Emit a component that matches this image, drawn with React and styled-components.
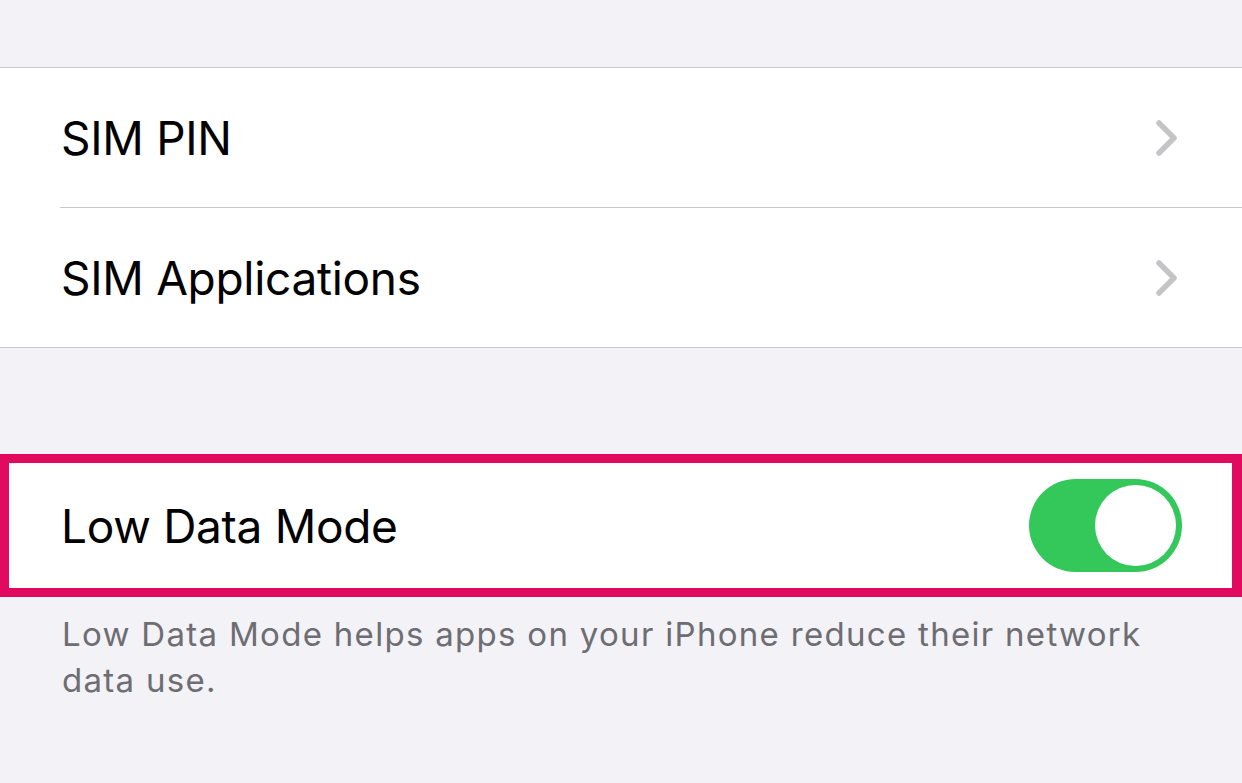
import React from "react";
import styled, { createGlobalStyle } from "styled-components";

const GlobalStyle = createGlobalStyle`
  html, body {
    margin: 0;
    padding: 0;
    background: #f2f2f7;
    font-family: Inter, "Noto Sans", "Liberation Sans", sans-serif;
    -webkit-font-smoothing: antialiased;
  }
`;

function Chevron() {
  return (
    <svg width="24" height="36" viewBox="0 0 24 36" fill="none">
      <path
        d="M4 3 L19 18 L4 33"
        stroke="#c4c4c7"
        strokeWidth="5.5"
        strokeLinecap="round"
        strokeLinejoin="round"
      />
    </svg>
  );
}

function App() {
  return (
    <Page>
      <GlobalStyle />
      <TopSpace />
      <Group>
        <Row>
          <Label>SIM PIN</Label>
          <Chevron />
        </Row>
        <Row last>
          <Label>SIM Applications</Label>
          <Chevron />
        </Row>
      </Group>
      <Highlight>
        <Label>Low Data Mode</Label>
        <Toggle>
          <Knob />
        </Toggle>
      </Highlight>
      <Footer>
        Low Data Mode helps apps on your iPhone reduce their network
        <br />
        data use.
      </Footer>
    </Page>
  );
}

const Page = styled.div`
  width: 1242px;
  height: 783px;
  background: #f2f2f7;
  overflow: hidden;
`;

const TopSpace = styled.div`
  height: 67px;
`;

const Group = styled.div`
  background: #fff;
  border-top: 1px solid #c8c7cc;
  border-bottom: 1px solid #c8c7cc;
  padding-left: 60px;
`;

const Row = styled.div`
  height: 139px;
  display: flex;
  align-items: center;
  justify-content: space-between;
  padding-right: 63px;
  border-bottom: ${(p) => (p.last ? "none" : "1px solid #c8c7cc")};
`;

const Label = styled.div`
  font-size: 46px;
  color: #000;
  padding-left: 1px;
  letter-spacing: -0.3px;
`;

const Highlight = styled.div`
  margin-top: 106px;
  height: 143px;
  box-sizing: border-box;
  border: 9px solid #e20a5e;
  border-right-width: 10px;
  background: #fff;
  display: flex;
  align-items: center;
  justify-content: space-between;
  padding-left: 51px;
  padding-right: 50px;
`;

const Toggle = styled.div`
  width: 153px;
  height: 93px;
  border-radius: 47px;
  background: #34c759;
  display: flex;
  align-items: center;
  justify-content: flex-end;
  padding-right: 6px;
  box-sizing: border-box;
`;

const Knob = styled.div`
  width: 81px;
  height: 81px;
  border-radius: 50%;
  background: #fff;
`;

const Footer = styled.div`
  padding: 14px 40px 0 62px;
  font-size: 33px;
  line-height: 46px;
  color: #6d6d72;
  letter-spacing: 1.3px;
  white-space: nowrap;
`;

export default App;
